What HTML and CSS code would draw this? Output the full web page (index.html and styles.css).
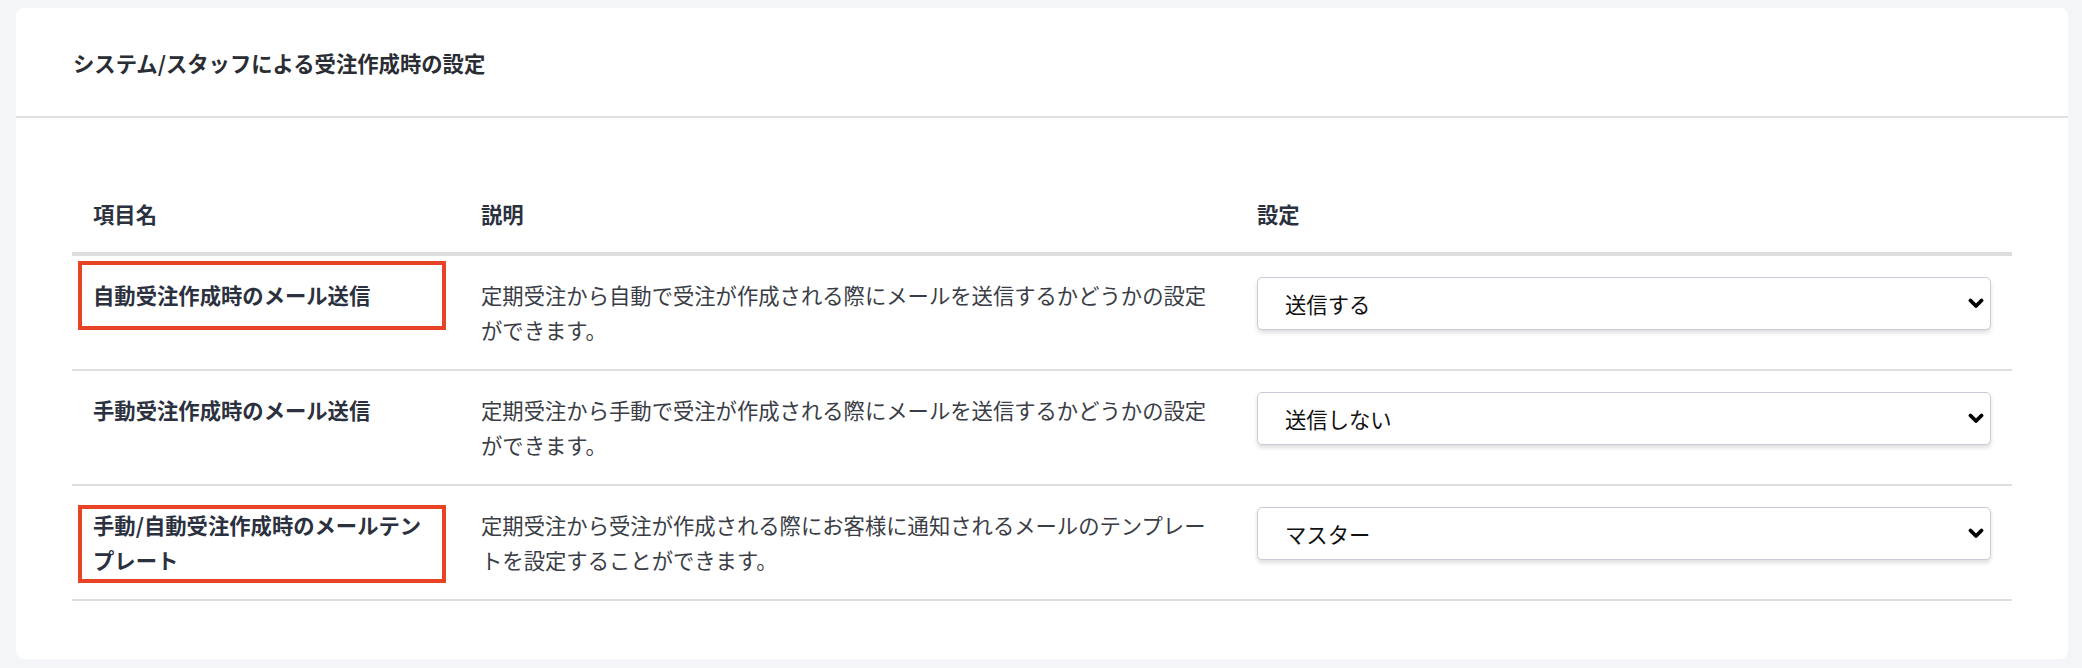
FILE: index.html
```html
<!DOCTYPE html>
<html lang="ja">

<head>
    <meta charset="UTF-8">
    <meta name="viewport" content="width=device-width, initial-scale=1.0">
    <title>受注作成時の設定</title>
    <link rel="stylesheet" href="styles.css">
</head>

<body>
    <section class="card">
        <header class="card-header">
            <h2>システム/スタッフによる受注作成時の設定</h2>
        </header>
        <div class="card-body">
            <table class="settings">
                <colgroup>
                    <col class="col-name">
                    <col class="col-desc">
                    <col class="col-value">
                </colgroup>
                <thead>
                    <tr>
                        <th>項目名</th>
                        <th>説明</th>
                        <th>設定</th>
                    </tr>
                </thead>
                <tbody>
                    <tr>
                        <td class="name">
                            自動受注作成時のメール送信
                            <span class="mark mark-first"></span>
                        </td>
                        <td class="desc">定期受注から自動で受注が作成される際にメールを送信するかどうかの設定ができます。</td>
                        <td>
                            <div class="select-wrap">
                                <select name="auto-mail">
                                    <option selected>送信する</option>
                                    <option>送信しない</option>
                                </select>
                                <svg class="chevron" viewBox="0 0 16 11" width="16" height="11">
                                    <path d="M2.5 2.5 L8 8 L13.5 2.5" fill="none" stroke="#000" stroke-width="3.8" stroke-linecap="round" stroke-linejoin="round" />
                                </svg>
                            </div>
                        </td>
                    </tr>
                    <tr>
                        <td class="name">手動受注作成時のメール送信</td>
                        <td class="desc">定期受注から手動で受注が作成される際にメールを送信するかどうかの設定ができます。</td>
                        <td>
                            <div class="select-wrap">
                                <select name="manual-mail">
                                    <option>送信する</option>
                                    <option selected>送信しない</option>
                                </select>
                                <svg class="chevron" viewBox="0 0 16 11" width="16" height="11">
                                    <path d="M2.5 2.5 L8 8 L13.5 2.5" fill="none" stroke="#000" stroke-width="3.8" stroke-linecap="round" stroke-linejoin="round" />
                                </svg>
                            </div>
                        </td>
                    </tr>
                    <tr>
                        <td class="name">
                            手動/自動受注作成時のメールテンプレート
                            <span class="mark mark-last"></span>
                        </td>
                        <td class="desc">定期受注から受注が作成される際にお客様に通知されるメールのテンプレートを設定することができます。</td>
                        <td>
                            <div class="select-wrap">
                                <select name="mail-template">
                                    <option selected>マスター</option>
                                </select>
                                <svg class="chevron" viewBox="0 0 16 11" width="16" height="11">
                                    <path d="M2.5 2.5 L8 8 L13.5 2.5" fill="none" stroke="#000" stroke-width="3.8" stroke-linecap="round" stroke-linejoin="round" />
                                </svg>
                            </div>
                        </td>
                    </tr>
                </tbody>
            </table>
        </div>
    </section>
</body>

</html>
```

FILE: styles.css
```css
html {
    font-family: "Noto Sans CJK JP", "Noto Sans", sans-serif;
    font-size: 21.33px;
    color: #2c3140;
}

body {
    margin: 0;
    padding: 8px 14px 0 16px;
    background-color: #f3f5f8;
}

.card {
    background-color: white;
    border-radius: 8px;
}

.card-header {
    padding: 37px 57px 35px;
    border-bottom: 2px solid #e0e0e0;
}

.card-header h2 {
    margin: 0;
    font-size: 1rem;
    line-height: 36px;
    font-weight: 700;
    color: #2a2d33;
}

.card-body {
    padding: 57px 56px 58px;
}

.settings {
    width: 100%;
    border-collapse: collapse;
    table-layout: fixed;
}

.col-name {
    width: 20%;
}

.col-desc,
.col-value {
    width: 40%;
}

.settings th,
.settings td {
    padding: 21px;
    text-align: left;
    vertical-align: top;
    line-height: 35px;
}

.settings th {
    font-weight: 700;
    border-bottom: 4px solid #dedede;
}

.settings td {
    padding-bottom: 22px;
    border-bottom: 2px solid #dedede;
}

.settings td.name {
    position: relative;
    font-weight: 700;
}

.settings td.desc {
    color: #3a3d45;
}

/* red annotation boxes */
.mark {
    position: absolute;
    left: 6px;
    right: 14px;
    border: 4px solid #e94325;
}

.mark-first {
    top: 5px;
    height: 61px;
}

.mark-last {
    top: 19px;
    height: 70px;
}

.select-wrap {
    position: relative;
}

.select-wrap select {
    appearance: none;
    -webkit-appearance: none;
    display: block;
    width: 100%;
    height: 53px;
    padding: 0 40px 0 27px;
    font-family: inherit;
    font-size: 1rem;
    color: #111;
    background-color: white;
    border: 1px solid #c8ccd8;
    border-radius: 5px;
    box-shadow: 0 3px 4px rgba(0, 0, 0, 0.13);
}

.chevron {
    position: absolute;
    right: 7px;
    top: 21px;
    pointer-events: none;
}
```
